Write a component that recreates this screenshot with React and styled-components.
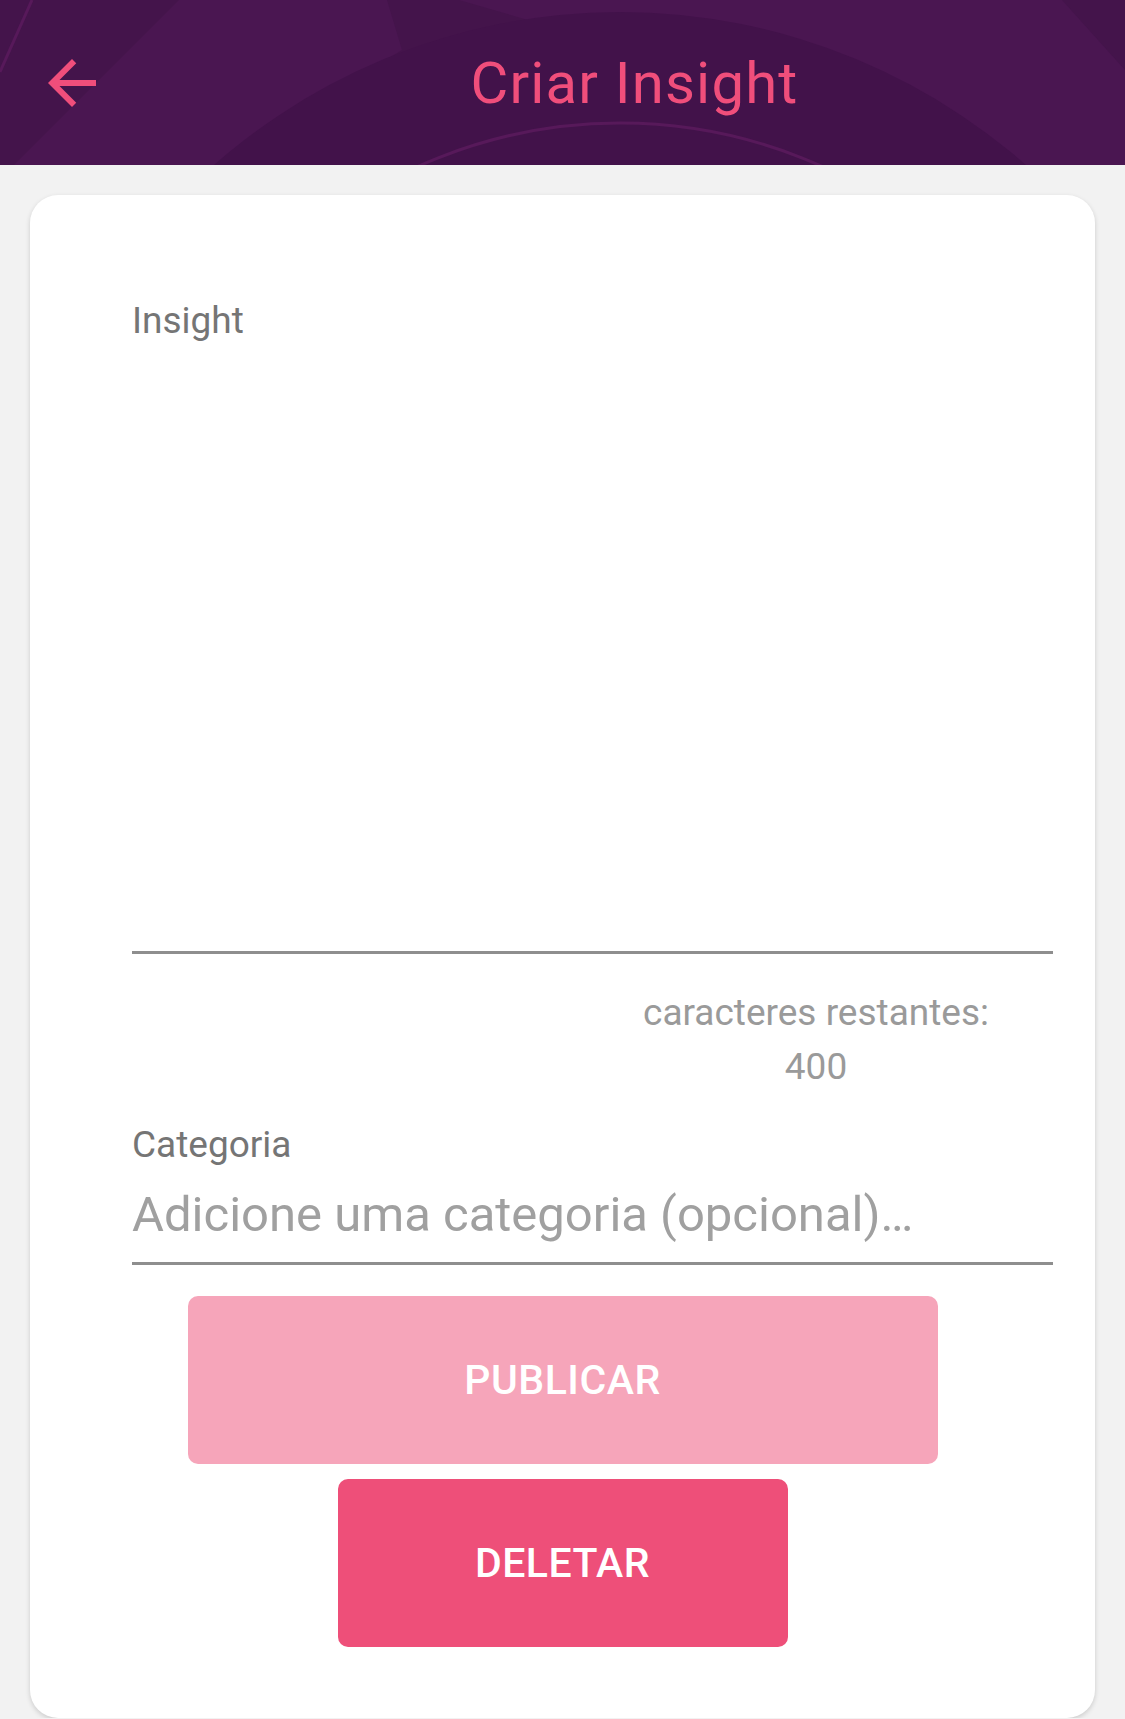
import React from 'react';
import styled, { createGlobalStyle } from 'styled-components';

const GlobalStyle = createGlobalStyle`
  * {
    box-sizing: border-box;
  }

  body {
    margin: 0;
    background-color: #f2f2f2;
    font-family: Roboto, "Noto Sans", "Liberation Sans", sans-serif;
  }
`;

const HeaderArt = () => (
  <StArt viewBox="0 0 1125 165" preserveAspectRatio="none">
    <rect width="1125" height="165" fill="#44144b" />
    <polygon points="179,0 387,0 402,50 215,165 14,165" fill="#4a1651" />
    <polygon points="459,0 1062,0 1125,70 1125,165 1026,165" fill="#4a1651" />
    <circle cx="620" cy="627" r="615" fill="#42124a" />
    <circle cx="620" cy="615" r="492" fill="none" stroke="#57195a" strokeWidth="3" />
    <line x1="32" y1="0" x2="0" y2="72" stroke="#57195a" strokeWidth="3" />
  </StArt>
);

const App = () => {
  return (
    <>
      <GlobalStyle />
      <StHeader>
        <HeaderArt />
        <StBack aria-label="voltar">
          <svg width="72" height="72" viewBox="0 0 24 24">
            <path
              fill="#f04e7b"
              d="M20 11H7.83l5.59-5.59L12 4l-8 8 8 8 1.41-1.41L7.83 13H20v-2z"
            />
          </svg>
        </StBack>
        <StTitle>Criar Insight</StTitle>
      </StHeader>

      <StCard>
        <StForm>
          <StLabel>Insight</StLabel>
          <StTextArea />
          <StCounter>
            caracteres restantes:
            <br />
            400
          </StCounter>
          <StLabel className="category">Categoria</StLabel>
          <StInput placeholder="Adicione uma categoria (opcional)…" />
        </StForm>

        <StActions>
          <StButton $width="750px" $color="#f6a5ba">
            PUBLICAR
          </StButton>
          <StButton $width="450px" $color="#ee4f79">
            DELETAR
          </StButton>
        </StActions>
      </StCard>
    </>
  );
};

export default App;

const StHeader = styled.header`
  position: relative;
  display: flex;
  align-items: center;

  height: 165px;
  overflow: hidden;
`;

const StArt = styled.svg`
  position: absolute;
  inset: 0;
  width: 100%;
  height: 100%;
`;

const StBack = styled.button`
  position: relative;
  display: flex;
  align-items: center;
  justify-content: center;

  width: 144px;
  height: 165px;
  padding: 0;

  background: none;
  border: none;
  cursor: pointer;
`;

const StTitle = styled.h1`
  position: relative;
  flex: 1;

  margin: 0;

  color: #f04e7b;
  font-size: 58px;
  font-weight: 400;
  letter-spacing: 1.2px;
  text-align: center;
`;

const StCard = styled.main`
  margin: 30px 30px 0;
  padding: 105px 0 71px;

  background-color: #ffffff;
  border-radius: 28px;
  box-shadow: 0 2px 5px rgba(0, 0, 0, 0.16);
`;

const StForm = styled.div`
  display: flex;
  flex-direction: column;

  padding: 0 42px 0 102px;
`;

const StLabel = styled.label`
  color: #757575;
  font-size: 37px;
  line-height: 42px;

  &.category {
    margin-top: 30px;
  }
`;

const StTextArea = styled.textarea`
  height: 612px;
  padding: 0;

  background: none;
  border: none;
  border-bottom: 3px solid #8e8e8e;
  outline: none;
  resize: none;

  font-family: inherit;
  font-size: 46px;
`;

const StCounter = styled.p`
  align-self: flex-end;

  margin: 32px 64px 0 0;

  color: #9a9a9a;
  font-size: 37px;
  line-height: 54px;
  text-align: center;
`;

const StInput = styled.input`
  margin-top: 20px;
  padding: 0 0 18px;

  background: none;
  border: none;
  border-bottom: 3px solid #8e8e8e;
  outline: none;

  color: #333333;
  font-family: inherit;
  font-size: 49px;
  line-height: 58px;

  &::placeholder {
    color: #a0a0a0;
  }
`;

const StActions = styled.div`
  display: flex;
  flex-direction: column;
  align-items: center;
  gap: 15px;

  margin-top: 31px;
`;

const StButton = styled.button`
  width: ${(props) => props.$width};
  height: 168px;

  background-color: ${(props) => props.$color};

  border: none;
  border-radius: 10px;

  color: #ffffff;
  font-family: inherit;
  font-size: 41px;
  font-weight: 500;
  letter-spacing: 0.5px;

  cursor: pointer;
`;
